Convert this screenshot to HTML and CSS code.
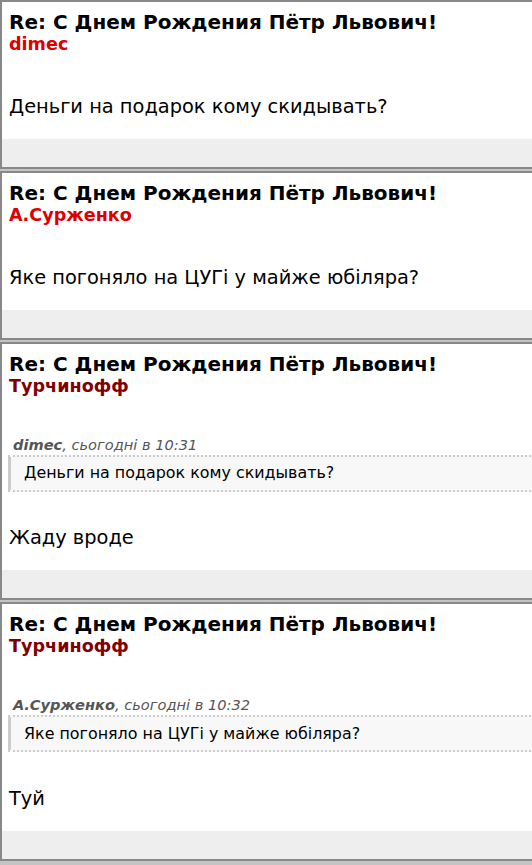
FILE: index.html
```html
<!DOCTYPE html>
<html>
<head>
<meta charset="utf-8">
<link rel="stylesheet" href="styles.css">
</head>
<body>
<div class="post">
  <div class="head">
    <div class="title">Re: С Днем Рождения Пётр Львович!</div>
    <div class="author red">dimec</div>
  </div>
  <div class="body">
    <div class="text">Деньги на подарок кому скидывать?</div>
  </div>
  <div class="foot"></div>
</div>
<div class="post">
  <div class="head">
    <div class="title">Re: С Днем Рождения Пётр Львович!</div>
    <div class="author red">А.Сурженко</div>
  </div>
  <div class="body">
    <div class="text">Яке погоняло на ЦУГі у майже юбіляра?</div>
  </div>
  <div class="foot"></div>
</div>
<div class="post">
  <div class="head">
    <div class="title">Re: С Днем Рождения Пётр Львович!</div>
    <div class="author maroon">Турчинофф</div>
  </div>
  <div class="body quoted">
    <div class="qhead"><b>dimec</b>, сьогодні в 10:31</div>
    <div class="quote">Деньги на подарок кому скидывать?</div>
    <div class="text">Жаду вроде</div>
  </div>
  <div class="foot"></div>
</div>
<div class="post">
  <div class="head">
    <div class="title">Re: С Днем Рождения Пётр Львович!</div>
    <div class="author maroon">Турчинофф</div>
  </div>
  <div class="body quoted">
    <div class="qhead"><b>А.Сурженко</b>, сьогодні в 10:32</div>
    <div class="quote">Яке погоняло на ЦУГі у майже юбіляра?</div>
    <div class="text">Туй</div>
  </div>
  <div class="foot"></div>
</div>
</body>
</html>
```
FILE: styles.css
```css
html, body {
  margin: 0;
  padding: 0;
  overflow: hidden;
}
body {
  background: #c4c4c4;
  font-family: "DejaVu Sans", Verdana, sans-serif;
  color: #000;
  width: 600px;
}
.post {
  width: 560px;
  border: 2px solid #888;
  background: #fff;
  margin-bottom: 2px;
}
.head {
  padding: 8px 7px 0;
}
.title {
  font-weight: bold;
  font-size: 20px;
  line-height: 24px;
}
.author {
  font-weight: bold;
  font-size: 17.6px;
  line-height: 21px;
}
.red { color: #dd0000; }
.maroon { color: #800000; }
.body {
  padding: 40px 7px 20px;
}
.body.quoted {
  padding-top: 38.6px;
}
.text {
  font-size: 19.4px;
  line-height: 24px;
}
.qhead {
  font-style: italic;
  font-size: 14.6px;
  line-height: 18px;
  color: #555;
  padding-left: 4px;
}
.qhead b {
  font-weight: bold;
}
.quote {
  margin: 1.4px 0 34.3px -1px;
  border: 2px dotted #ccc;
  border-left: 3px solid #ccc;
  background: #f8f8f8;
  padding: 6.5px 13px;
  font-size: 15.9px;
  line-height: 20px;
  color: #000;
}
.foot {
  height: 28px;
  background: #eee;
}
```
